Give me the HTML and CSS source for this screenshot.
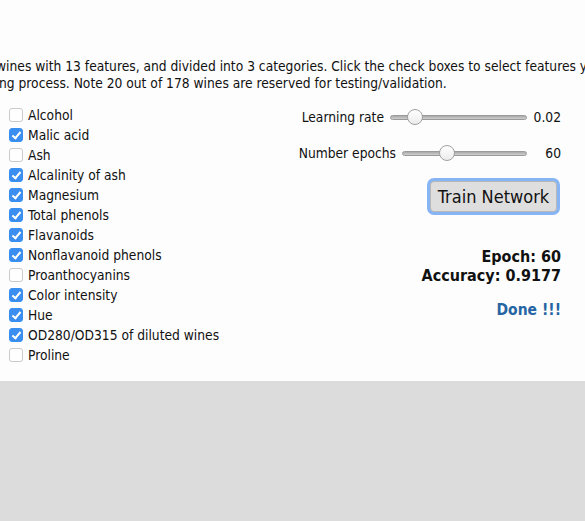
FILE: index.html
```html
<!DOCTYPE html>
<html>
<head>
<meta charset="utf-8">
<link rel="stylesheet" href="styles.css">
</head>
<body>
<div class="panel">
  <div class="intro">
    <div class="line l1">wines with 13 features, and divided into 3 categories. Click the check boxes to select features you</div>
    <div class="line l2">ng process. Note 20 out of 178 wines are reserved for testing/validation.</div>
  </div>
  <div class="main">
    <ul class="features">
      <li><span class="cb"></span>Alcohol</li>
      <li><span class="cb on"></span>Malic acid</li>
      <li><span class="cb"></span>Ash</li>
      <li><span class="cb on"></span>Alcalinity of ash</li>
      <li><span class="cb on"></span>Magnesium</li>
      <li><span class="cb on"></span>Total phenols</li>
      <li><span class="cb on"></span>Flavanoids</li>
      <li><span class="cb on"></span>Nonflavanoid phenols</li>
      <li><span class="cb"></span>Proanthocyanins</li>
      <li><span class="cb on"></span>Color intensity</li>
      <li><span class="cb on"></span>Hue</li>
      <li><span class="cb on"></span>OD280/OD315 of diluted wines</li>
      <li><span class="cb"></span>Proline</li>
    </ul>
    <div class="controls">
      <div class="ctl ctl-lr">
        <span class="lbl">Learning rate</span>
        <span class="slider s-lr"><span class="thumb"></span></span>
        <span class="val">0.02</span>
      </div>
      <div class="ctl ctl-ep">
        <span class="lbl">Number epochs</span>
        <span class="slider s-ep"><span class="thumb"></span></span>
        <span class="val">60</span>
      </div>
      <button class="train">Train Network</button>
      <div class="stats">
        <div>Epoch: 60</div>
        <div>Accuracy: 0.9177</div>
      </div>
      <div class="done">Done !!!</div>
    </div>
  </div>
</div>
</body>
</html>
```

FILE: styles.css
```css
html, body {
  margin: 0;
  padding: 0;
}
body {
  background: #dcdcdc;
  font-family: "DejaVu Sans Condensed", "DejaVu Sans", sans-serif;
  font-size: 13.7px;
  color: #111;
  overflow: hidden;
}
.panel {
  background: #fdfdfd;
  height: 381px;
  overflow: hidden;
  box-sizing: border-box;
  padding-top: 58px;
}
.intro {
  overflow: hidden;
  line-height: 17px;
}
.line {
  white-space: nowrap;
}
.l1 { margin-left: -4px; }
.l2 { margin-left: -1px; }
.main {
  display: flex;
  justify-content: space-between;
  margin-top: 13px;
  padding-right: 24px;
}
.features {
  list-style: none;
  margin: 0;
  padding: 0 0 0 9px;
}
.features li {
  display: flex;
  align-items: center;
  height: 20px;
}
.cb {
  width: 12px;
  height: 12px;
  border: 1px solid #c9c9c9;
  border-radius: 3px;
  background: #fff;
  margin-right: 5px;
  position: relative;
  flex: none;
}
.cb.on {
  background: #3a8ef0;
  border-color: #3a8ef0;
}
.cb.on::after {
  content: "";
  position: absolute;
  left: 4px;
  top: 1px;
  width: 3px;
  height: 7px;
  border: solid #fff;
  border-width: 0 2px 2px 0;
  transform: rotate(40deg);
}
.controls {
  display: flex;
  flex-direction: column;
  align-items: flex-end;
}
.ctl {
  display: flex;
  align-items: center;
  height: 20px;
}
.ctl-lr { margin-top: 2px; }
.ctl-ep { margin-top: 16px; }
.lbl { margin-right: 6px; }
.slider {
  display: block;
  height: 5px;
  border-radius: 3px;
  background: linear-gradient(#a9a9a9, #cfcfcf);
  border: 1px solid #9a9a9a;
  position: relative;
  box-sizing: border-box;
}
.s-lr { width: 137px; }
.s-ep { width: 125px; }
.thumb {
  position: absolute;
  top: 50%;
  width: 16px;
  height: 16px;
  margin-top: -8px;
  margin-left: -8px;
  border-radius: 50%;
  background: linear-gradient(#ffffff, #ececec);
  border: 1px solid #a0a0a0;
  box-sizing: border-box;
}
.s-lr .thumb { left: 24px; }
.s-ep .thumb { left: 44px; }
.val {
  display: block;
  width: 34px;
  text-align: right;
}
.train {
  margin-top: 18px;
  margin-right: 4px;
  font-family: inherit;
  font-size: 18px;
  color: #111;
  background: #dedede;
  border: 1px solid #b8b8b8;
  border-radius: 4px;
  width: 127px;
  height: 31px;
  padding: 0;
  box-shadow: 0 0 0 3px #86b4f4;
}
.stats {
  margin-top: 35px;
  font-weight: bold;
  font-size: 16px;
  line-height: 19px;
  text-align: right;
}
.done {
  margin-top: 16px;
  font-weight: bold;
  font-size: 15.5px;
  line-height: 19px;
  color: #2665a3;
}
```
